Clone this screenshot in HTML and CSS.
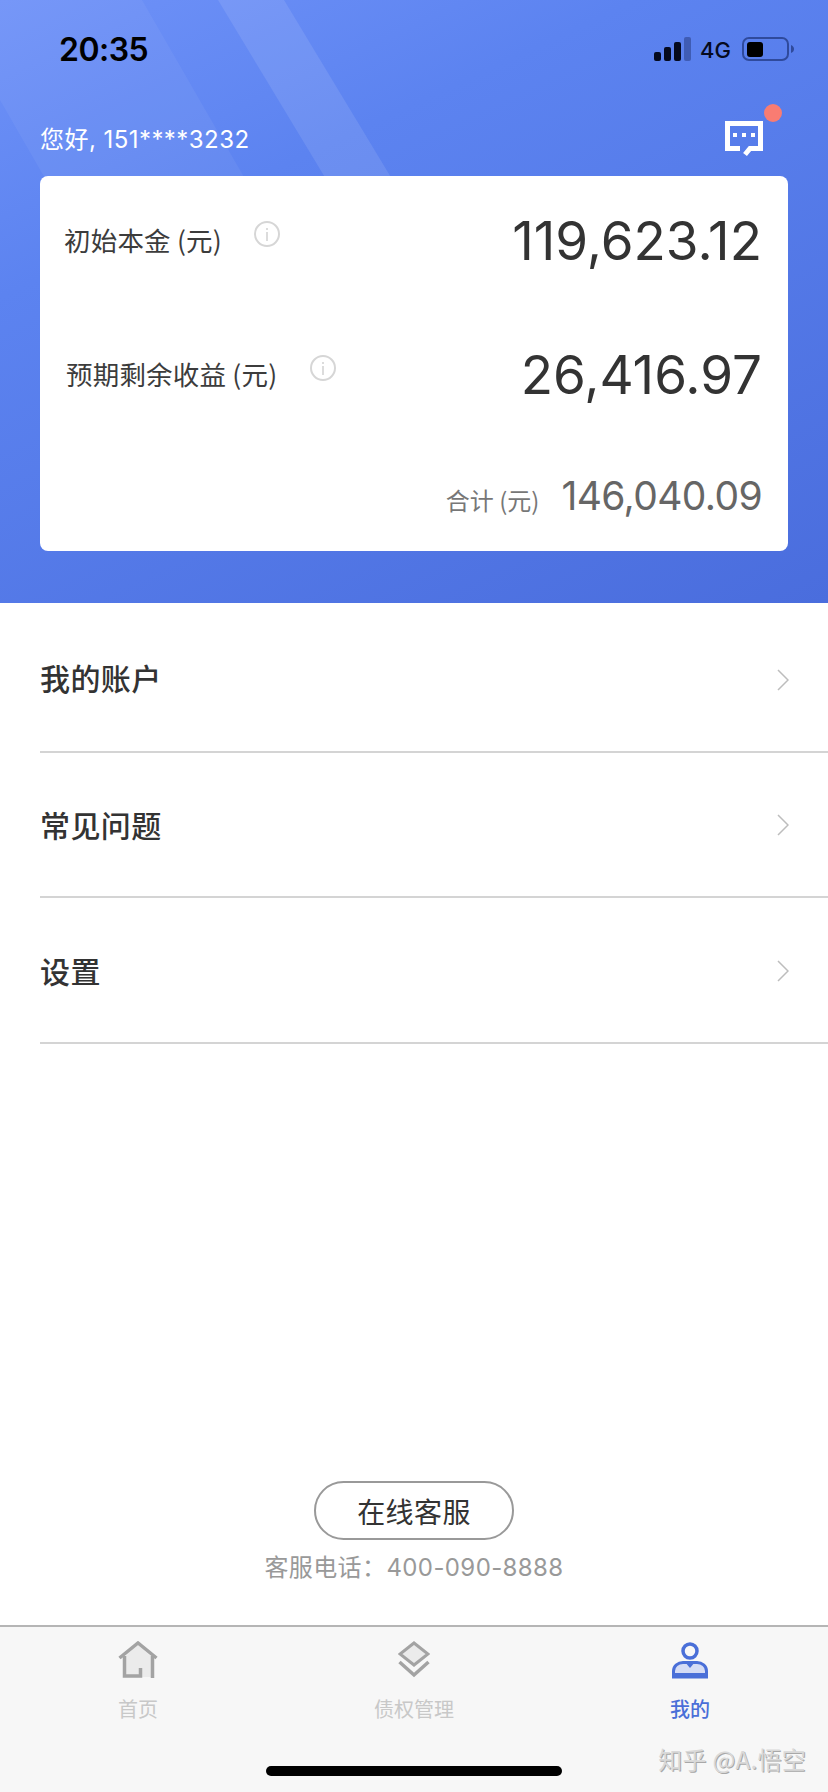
FILE: index.html
```html
<!DOCTYPE html>
<html lang="zh-CN">
<head>
<meta charset="utf-8">
<title>我的</title>
<link rel="stylesheet" href="styles.css">
</head>
<body>
<div class="phone">
  <header class="hero">
    <svg class="hero-bands" viewBox="0 0 828 300" width="828" height="300" aria-hidden="true">
      <polygon class="band-a" points="0,0 142,0 315,300 115,300 0,100"/>
      <polygon class="band-b" points="218,0 284,0 465,300 399,300"/>
    </svg>
    <div class="status">
      <span class="time">20:35</span>
      <div class="status-right">
        <svg class="signal" viewBox="0 0 37 24" width="37" height="24" aria-hidden="true">
          <rect x="0" y="15" width="7" height="9" rx="2" fill="#050a1e"/>
          <rect x="10" y="10" width="7" height="14" rx="2" fill="#050a1e"/>
          <rect x="20" y="5" width="7" height="19" rx="2" fill="#050a1e"/>
          <rect x="30" y="0" width="7" height="24" rx="2" fill="#3f5cb4"/>
        </svg>
        <span class="net">4G</span>
        <svg class="battery" viewBox="0 0 52 24" width="52" height="24" aria-hidden="true">
          <rect x="1" y="1" width="45" height="22" rx="6" fill="none" stroke="#2f4a9c" stroke-width="2"/>
          <rect x="5" y="5" width="16" height="15" rx="3" fill="#000"/>
          <path d="M49 8 C51 9 52 10 52 12 C52 14 51 15 49 16 Z" fill="#2f4a9c"/>
        </svg>
      </div>
    </div>
    <div class="greet-row">
      <span class="greet">您好, 151****3232</span>
      <div class="chat">
        <svg viewBox="0 0 38 36" width="38" height="36" aria-hidden="true">
          <path d="M15 27.5 H2.500 V2.500 H35.500 V27.500 H25 L20 33.500" fill="none" stroke="#fff" stroke-width="5"/>
          <rect x="8" y="12" width="4" height="4" fill="#fff"/>
          <rect x="17" y="12" width="4" height="4" fill="#fff"/>
          <rect x="26" y="12" width="4" height="4" fill="#fff"/>
        </svg>
        <span class="chat-dot"></span>
      </div>
    </div>
    <section class="card">
      <div class="amount amount-first">
        <div class="amount-label">
          <span>初始本金 (元)</span>
          <svg class="info" viewBox="0 0 26 26" width="26" height="26" aria-hidden="true">
            <circle cx="13" cy="13" r="12" fill="none" stroke="#d6d6d6" stroke-width="2"/>
            <rect x="12" y="11" width="2" height="9" fill="#dcdcdc"/>
            <rect x="12" y="7" width="2" height="2" fill="#dcdcdc"/>
          </svg>
        </div>
        <span class="amount-value">119,623.12</span>
      </div>
      <div class="amount amount-second">
        <div class="amount-label">
          <span>预期剩余收益 (元)</span>
          <svg class="info" viewBox="0 0 26 26" width="26" height="26" aria-hidden="true">
            <circle cx="13" cy="13" r="12" fill="none" stroke="#d6d6d6" stroke-width="2"/>
            <rect x="12" y="11" width="2" height="9" fill="#dcdcdc"/>
            <rect x="12" y="7" width="2" height="2" fill="#dcdcdc"/>
          </svg>
        </div>
        <span class="amount-value">26,416.97</span>
      </div>
      <div class="total">
        <span class="total-label">合计 (元)</span>
        <span class="total-value">146,040.09</span>
      </div>
    </section>
  </header>

  <nav class="menu">
    <div class="menu-row">
      <span class="menu-text">我的账户</span>
      <svg class="chev" viewBox="0 0 12 22" width="12" height="22" aria-hidden="true"><polyline points="1,1 11,11 1,21" fill="none" stroke="#bdbdbd" stroke-width="1.500"/></svg>
    </div>
    <div class="menu-row">
      <span class="menu-text">常见问题</span>
      <svg class="chev" viewBox="0 0 12 22" width="12" height="22" aria-hidden="true"><polyline points="1,1 11,11 1,21" fill="none" stroke="#bdbdbd" stroke-width="1.500"/></svg>
    </div>
    <div class="menu-row">
      <span class="menu-text">设置</span>
      <svg class="chev" viewBox="0 0 12 22" width="12" height="22" aria-hidden="true"><polyline points="1,1 11,11 1,21" fill="none" stroke="#bdbdbd" stroke-width="1.500"/></svg>
    </div>
  </nav>

  <div class="support">
    <div class="support-btn">在线客服</div>
    <div class="support-tel">客服电话：400-090-8888</div>
  </div>

  <footer class="tabbar">
    <div class="tabs">
      <div class="tab">
        <svg class="tab-icon" viewBox="0 0 40 38" width="40" height="38" aria-hidden="true">
          <polygon points="6,16 20,4 34,16 34,36 6,36" fill="#ebebeb"/>
          <polyline points="1.500,17 20,2 38.500,17" fill="none" stroke="#a3a3a3" stroke-width="3.500"/>
          <polyline points="6.500,15 6.500,35 22.500,35 22.500,27" fill="none" stroke="#a3a3a3" stroke-width="3.500"/>
          <line x1="34.500" y1="15" x2="34.500" y2="37" stroke="#a3a3a3" stroke-width="3.500"/>
        </svg>
        <span>首页</span>
      </div>
      <div class="tab">
        <svg class="tab-icon" viewBox="0 0 32 38" width="32" height="38" aria-hidden="true">
          <polygon points="16,2 30,13 16,24 2,13" fill="#ebebeb" stroke="#a3a3a3" stroke-width="3"/>
          <polyline points="1.500,21 16,34 30.500,21" fill="none" stroke="#a3a3a3" stroke-width="3.500"/>
        </svg>
        <span>债权管理</span>
      </div>
      <div class="tab tab-active">
        <svg class="tab-icon" viewBox="0 0 36 38" width="36" height="38" aria-hidden="true">
          <circle cx="18" cy="10" r="7" fill="none" stroke="#4a6fd8" stroke-width="3.500"/>
          <path d="M1.500 36 V30 C1.500 25 6 21.500 11 21.500 H25 C30 21.500 34.500 25 34.500 30 V36 Z" fill="#d5dcf5" stroke="#4a6fd8" stroke-width="3"/>
          <polygon points="13,21 23,21 18,27" fill="#4a6fd8"/>
          <rect x="1" y="32" width="34" height="5" fill="#4a6fd8"/>
        </svg>
        <span>我的</span>
      </div>
    </div>
    <div class="home-bar"></div>
    <span class="watermark">知乎 @A.悟空</span>
  </footer>
</div>
</body>
</html>
```
FILE: styles.css
```css
* { box-sizing: border-box; }
html, body { margin: 0; padding: 0; background: #fff; }
body {
  font-family: "Noto Sans CJK SC", "Noto Sans", sans-serif;
  color: #333;
}
.phone {
  width: 828px;
  height: 1792px;
  display: flex;
  flex-direction: column;
  overflow: hidden;
  background: #fff;
}

/* Hero */
.hero {
  position: relative;
  height: 603px;
  flex: none;
  background: linear-gradient(155deg, #6f92f8 0%, #5c83f0 30%, #4a6ddd 100%);
  overflow: hidden;
}
.hero-bands { position: absolute; left: 0; top: 0; }
.band-a { fill: #fff; fill-opacity: 0.05; }
.band-b { fill: #fff; fill-opacity: 0.1; }

.status {
  position: relative;
  height: 98px;
  display: flex;
  align-items: center;
  justify-content: space-between;
  padding: 0 34px 0 59px;
}
.time {
  font-family: Inter, "Liberation Sans", sans-serif;
  font-size: 32px;
  font-weight: 600;
  letter-spacing: -0.5px;
  color: #000;
}
.status-right { display: flex; align-items: center; padding-top: 2px; }
.signal { display: block; margin-top: -2px; }
.net {
  margin-left: 9px;
  margin-right: 11px;
  font-family: Inter, "Liberation Sans", sans-serif;
  font-size: 22px;
  font-weight: 500;
  color: #050a1e;
}
.battery { display: block; margin-top: -2px; }

.greet-row {
  position: relative;
  height: 78px;
  display: flex;
  align-items: center;
  justify-content: space-between;
  padding: 0 65px 0 40px;
}
.greet {
  padding-top: 6px;
  font-family: Inter, "Noto Sans CJK SC", sans-serif;
  font-size: 24px;
  line-height: 32px;
  letter-spacing: 0.45px;
  color: #fff;
}
.chat { position: relative; width: 38px; height: 36px; margin-top: 4px; }
.chat svg { display: block; }
.chat-dot {
  position: absolute;
  left: 39px;
  top: -17px;
  width: 18px;
  height: 18px;
  border-radius: 50%;
  background: #f97c72;
}

/* Card */
.card {
  position: relative;
  width: 748px;
  height: 375px;
  margin-left: 40px;
  padding-right: 26px;
  background: #fff;
  border-radius: 8px;
}
.amount { display: flex; align-items: center; justify-content: space-between; }
.amount-first { height: 130px; padding-left: 24px; }
.amount-second { height: 138px; padding-left: 26px; }
.amount-label {
  display: flex;
  align-items: center;
  gap: 32px;
  font-size: 26.500px;
  line-height: 36px;
  letter-spacing: 0.2px;
  color: #3c3c3c;
}
.amount-second .amount-label { gap: 33px; }
.amount-label > span { position: relative; top: -1px; }
.info { display: block; margin-bottom: 14px; flex: none; }
.amount-value {
  font-family: Inter, "Liberation Sans", sans-serif;
  font-size: 53px;
  color: #333;
}
.total {
  display: flex;
  align-items: baseline;
  justify-content: flex-end;
  gap: 22px;
  padding-top: 26px;
}
.total-label { font-size: 24px; color: #777; }
.total-value {
  font-family: Inter, "Liberation Sans", sans-serif;
  font-size: 39px;
  line-height: 52px;
  letter-spacing: -0.6px;
  color: #666;
}

/* Menu */
.menu { flex: 1; padding-top: 4px; }
.menu-row {
  height: 145.500px;
  margin-left: 40px;
  padding-right: 39px;
  display: flex;
  align-items: center;
  justify-content: space-between;
  border-bottom: 2px solid #d4d4d4;
  font-size: 30px;
  font-weight: 500;
  color: #333;
}
.menu-text { font-size: 30px; letter-spacing: 0.4px; }
.menu-row:first-child .menu-text { margin-bottom: 3px; }
.chev { display: block; margin-top: 2px; }

/* Support */
.support {
  display: flex;
  flex-direction: column;
  align-items: center;
  gap: 12px;
  padding-bottom: 41px;
}
.support-btn {
  width: 200px;
  height: 59px;
  display: flex;
  align-items: center;
  justify-content: center;
  border: 2px solid #999;
  border-radius: 30px;
  font-size: 28px;
  letter-spacing: 0.4px;
  color: #333;
}
.support-tel {
  font-family: Inter, "Noto Sans CJK SC", sans-serif;
  font-size: 24px;
  line-height: 32px;
  letter-spacing: 0.4px;
  color: #999;
}

/* Tab bar */
.tabbar {
  position: relative;
  height: 167px;
  flex: none;
  display: flex;
  flex-direction: column;
  border-top: 2px solid #b5b5b5;
  background: #f7f7f7;
}
.tabs {
  display: grid;
  grid-template-columns: repeat(3, 1fr);
  padding-top: 14px;
}
.tab {
  display: flex;
  flex-direction: column;
  align-items: center;
  gap: 16px;
  font-size: 20px;
  line-height: 28px;
  color: #c8c8c8;
}
.tab-icon { display: block; }
.tab-active { color: #4a6fd8; font-weight: 500; }
.home-bar {
  width: 296px;
  height: 10px;
  margin: 43px auto 0;
  border-radius: 5px;
  background: #000;
}
.watermark {
  position: absolute;
  right: 22px;
  top: 116px;
  font-size: 24px;
  line-height: 32px;
  letter-spacing: 0.3px;
  color: #d9d9d9;
  text-shadow: 1px 1px 0 #a8a8a8;
}
```
